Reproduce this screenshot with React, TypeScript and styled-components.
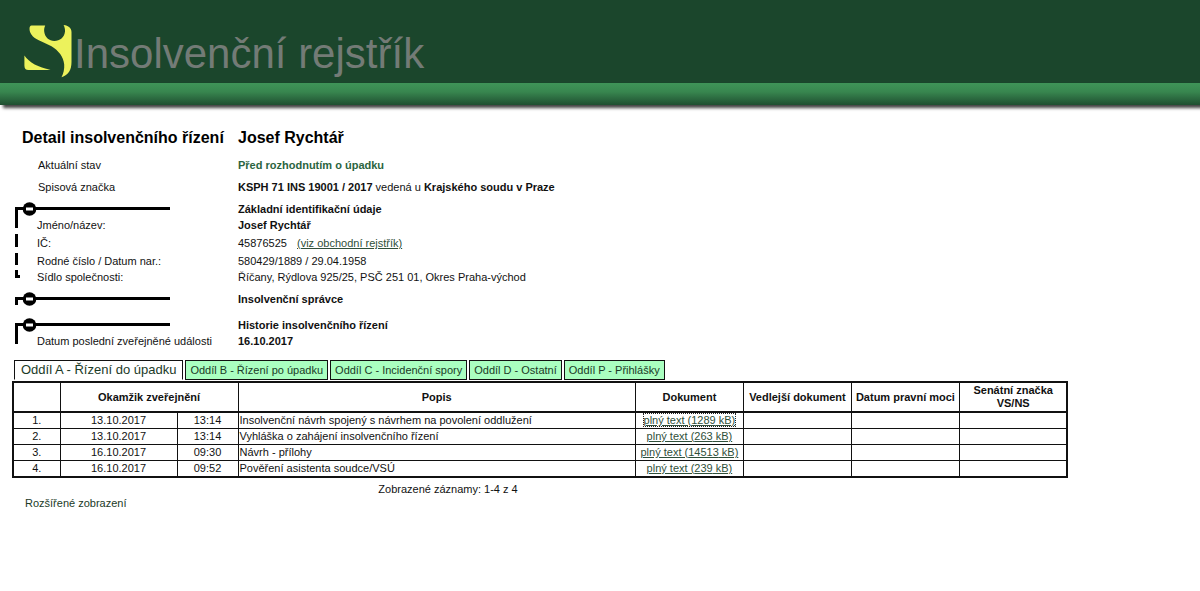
import React from 'react';
import styled, { createGlobalStyle } from 'styled-components';

const GlobalStyle = createGlobalStyle`
  * { box-sizing: border-box; }
  body {
    margin: 0;
    background: #fff;
    color: #111;
    font-family: "Liberation Sans", Arial, Helvetica, sans-serif;
    font-size: 11px;
    line-height: 16px;
  }
`;

const Header = styled.header`
  background: #1b462c;
`;

const Brand = styled.div`
  display: flex;
  align-items: flex-start;
  height: 83px;
  padding: 24px 0 0 24px;
`;

const Logo = styled.svg`
  flex: none;
  width: 48px;
  height: 54px;
`;

const BrandName = styled.span`
  margin-left: 2px;
  color: #737b76;
  font-size: 42px;
  line-height: 60px;
  white-space: nowrap;
`;

const Stripe = styled.div`
  height: 22px;
  background: linear-gradient(#3f9458, #38864f 40%, #1f4f31);
  box-shadow: 3px 3px 3px #444;
`;

const Main = styled.main`
  padding: 23px 0 24px 13px;
`;

const Row = styled.div<{ $height?: number; $before?: number }>`
  display: grid;
  grid-template-columns: 225px 1fr;
  height: ${p => p.$height ?? 16}px;
  margin-top: ${p => p.$before ?? 0}px;
  align-items: center;
`;

const Title = styled.h1`
  margin: 0;
  padding-left: 9px;
  color: #000;
  font-size: 16px;
  line-height: 20px;
  white-space: nowrap;
`;

const Subject = styled(Title)`
  padding-left: 0;
`;

const Label = styled.span`
  padding-left: 25px;
  white-space: nowrap;
`;

const Status = styled.strong`
  color: #2b6440;
`;

const Branch = styled.div`
  display: flex;
  align-items: center;
  height: 100%;
  padding-left: 2px;
`;

const BranchText = styled.span`
  margin-left: 2px;
  white-space: nowrap;
`;

const Drawing = styled.svg`
  flex: none;
  display: block;
  overflow: visible;
`;

const Toggle = styled.button`
  display: block;
  padding: 0;
  border: 0;
  background: none;
  cursor: pointer;
`;

const Link = styled.a<{ $focused?: boolean }>`
  color: #2f4f3a;
  text-decoration: underline;
  outline: ${p => (p.$focused ? '1px dotted #222' : 'none')};
`;

const RegisterLink = styled(Link)`
  margin-left: 7px;
`;

const Tabs = styled.nav`
  display: flex;
  gap: 2px;
  margin: 11px 0 1px 1px;
`;

const Tab = styled.a<{ $active?: boolean }>`
  height: 20px;
  padding: 0 ${p => (p.$active ? 6 : 4)}px;
  border: 1px solid #111;
  border-bottom-color: ${p => (p.$active ? '#fff' : '#111')};
  background: ${p => (p.$active ? '#fff' : '#aaffc0')};
  color: #1b3a27;
  font-size: ${p => (p.$active ? 13 : 11)}px;
  line-height: 18px;
  text-decoration: none;
  white-space: nowrap;
`;

const Table = styled.table`
  width: 89%;
  margin-left: -1px;
  table-layout: fixed;
  border-collapse: collapse;
  border: 2px solid #111;
`;

const Head = styled.thead`
  border-bottom: 2px solid #111;
`;

const HeadCell = styled.th`
  height: 30px;
  padding: 0;
  border-right: 1px solid #111;
  line-height: 13px;
`;

const Cell = styled.td<{ $left?: boolean }>`
  height: 16px;
  padding: 0 1px;
  border: 1px solid #111;
  line-height: 15px;
  text-align: ${p => (p.$left ? 'left' : 'center')};
  white-space: nowrap;
`;

const Column = styled.col<{ $width?: number }>`
  width: ${p => (p.$width ? `${p.$width}px` : 'auto')};
`;

const Footer = styled.footer`
  display: flex;
  flex-direction: column;
  align-items: flex-start;
  padding: 4px 0 0 12px;
`;

const Count = styled.p`
  width: 72%;
  margin: 0;
  line-height: 14px;
  text-align: center;
`;

const Extended = styled.a`
  line-height: 14px;
  color: #1b3a27;
  text-decoration: none;
`;

const columnWidths = [47, 117, 61, undefined, 108, 108, 108, 108];

const events = [
  { date: '13.10.2017', time: '13:14', text: 'Insolvenční návrh spojený s návrhem na povolení oddlužení', size: '1289' },
  { date: '13.10.2017', time: '13:14', text: 'Vyhláška o zahájení insolvenčního řízení', size: '263' },
  { date: '16.10.2017', time: '09:30', text: 'Návrh - přílohy', size: '14513' },
  { date: '16.10.2017', time: '09:52', text: 'Pověření asistenta soudce/VSÚ', size: '239' },
];

const sections = [
  'Oddíl A - Řízení do úpadku',
  'Oddíl B - Řízení po úpadku',
  'Oddíl C - Incidenční spory',
  'Oddíl D - Ostatní',
  'Oddíl P - Přihlášky',
];

function SectionRow({ title, before, stem = 16 }: { title: string; before: number; stem?: number }) {
  return (
    <Row $before={before}>
      <Branch>
        <Toggle type="button" aria-label={`Sbalit: ${title}`}>
          <Drawing width="155" height="16" viewBox="0 0 155 16">
            <path d={`M1.500 ${stem}V7.500H155`} fill="none" stroke="#000" strokeWidth="3" />
            <circle cx="14.500" cy="8" r="6.800" />
            <rect x="11" y="6.500" width="7" height="3" fill="#fff" />
          </Drawing>
        </Toggle>
      </Branch>
      <strong>{title}</strong>
    </Row>
  );
}

function FieldRow({ label, line, height = 16, children }: { label: string; line: string; height?: number; children: React.ReactNode }) {
  return (
    <Row $height={height}>
      <Branch>
        <Drawing width="20" height={height} viewBox={`0 0 20 ${height}`}>
          <path d={line} fill="none" stroke="#000" strokeWidth="3" />
        </Drawing>
        <BranchText>{label}</BranchText>
      </Branch>
      <span>{children}</span>
    </Row>
  );
}

export default function App() {
  return (
    <>
      <GlobalStyle />
      <Header>
        <Brand>
          <Logo viewBox="24 24 48 54" aria-hidden="true">
            <path
              fill="#ecf25c"
              d="M31.500 25.500H45.200C44.300 27.500 44 29.500 44.200 31.500C44.800 37.300 49.300 41 54.300 41C59.800 41 64.500 37.300 65 31.500C65.200 29.200 64.600 27 63.600 25C68.500 25.500 71.500 28 71.500 32V62C71.500 70 68.500 75 61.500 77.300C63.500 73.500 64.500 69 64.200 64.500C63.600 57 58.500 50.500 51.500 46.300L41.500 41.500C34 38.500 29.700 34.500 29.500 29C29.500 27 30.200 25.500 31.500 25.500Z"
            />
            <path fill="#ecf25c" d="M24.400 55.500C29 62.500 38.500 67.500 50.500 69.700L47 70H28.500C25.700 70 24.400 68.500 24.400 65.500Z" />
          </Logo>
          <BrandName>Insolvenční rejstřík</BrandName>
        </Brand>
        <Stripe />
      </Header>

      <Main>
        <Row $height={20}>
          <Title>Detail insolvenčního řízení</Title>
          <Subject as="h2">Josef Rychtář</Subject>
        </Row>
        <Row $before={7} $height={20}>
          <Label>Aktuální stav</Label>
          <Status>Před rozhodnutím o úpadku</Status>
        </Row>
        <Row $before={2} $height={20}>
          <Label>Spisová značka</Label>
          <span>
            <strong>KSPH 71 INS 19001 / 2017</strong> vedená u <strong>Krajského soudu v Praze</strong>
          </span>
        </Row>

        <SectionRow title="Základní identifikační údaje" before={4} />
        <FieldRow label="Jméno/název:" line="M1.500 0V11">
          <strong>Josef Rychtář</strong>
        </FieldRow>
        <FieldRow label="IČ:" line="M1.500 1V14" height={20}>
          45876525{' '}
          <RegisterLink href="#rejstrik">(viz obchodní rejstřík)</RegisterLink>
        </FieldRow>
        <FieldRow label="Rodné číslo / Datum nar.:" line="M1.500 0V12">
          580429/1889 / 29.04.1958
        </FieldRow>
        <FieldRow label="Sídlo společnosti:" line="M1.500 1V7.500H5">
          Říčany, Rýdlova 925/25, PSČ 251 01, Okres Praha-východ
        </FieldRow>

        <SectionRow title="Insolvenční správce" before={6} stem={14} />
        <SectionRow title="Historie insolvenčního řízení" before={10} />
        <FieldRow label="Datum poslední zveřejněné události" line="M1.500 0V11">
          <strong>16.10.2017</strong>
        </FieldRow>

        <Tabs>
          {sections.map((name, i) => (
            <Tab key={name} href={`#oddil-${i}`} $active={i === 0}>
              {name}
            </Tab>
          ))}
        </Tabs>

        <Table>
          <colgroup>
            {columnWidths.map((w, i) => (
              <Column key={i} $width={w} />
            ))}
          </colgroup>
          <Head>
            <tr>
              <HeadCell />
              <HeadCell colSpan={2}>Okamžik zveřejnění</HeadCell>
              <HeadCell>Popis</HeadCell>
              <HeadCell>Dokument</HeadCell>
              <HeadCell>Vedlejší dokument</HeadCell>
              <HeadCell>Datum pravní moci</HeadCell>
              <HeadCell>
                Senátní značka
                <br />
                VS/NS
              </HeadCell>
            </tr>
          </Head>
          <tbody>
            {events.map((e, i) => (
              <tr key={i}>
                <Cell>{i + 1}.</Cell>
                <Cell>{e.date}</Cell>
                <Cell>{e.time}</Cell>
                <Cell $left>{e.text}</Cell>
                <Cell>
                  <Link href={`#dokument-${i + 1}`} $focused={i === 0}>
                    plný text ({e.size} kB)
                  </Link>
                </Cell>
                <Cell />
                <Cell />
                <Cell />
              </tr>
            ))}
          </tbody>
        </Table>
        <Footer>
          <Count>Zobrazené záznamy: 1-4 z 4</Count>
          <Extended href="#rozsirene">Rozšířené zobrazení</Extended>
        </Footer>
      </Main>
    </>
  );
}
